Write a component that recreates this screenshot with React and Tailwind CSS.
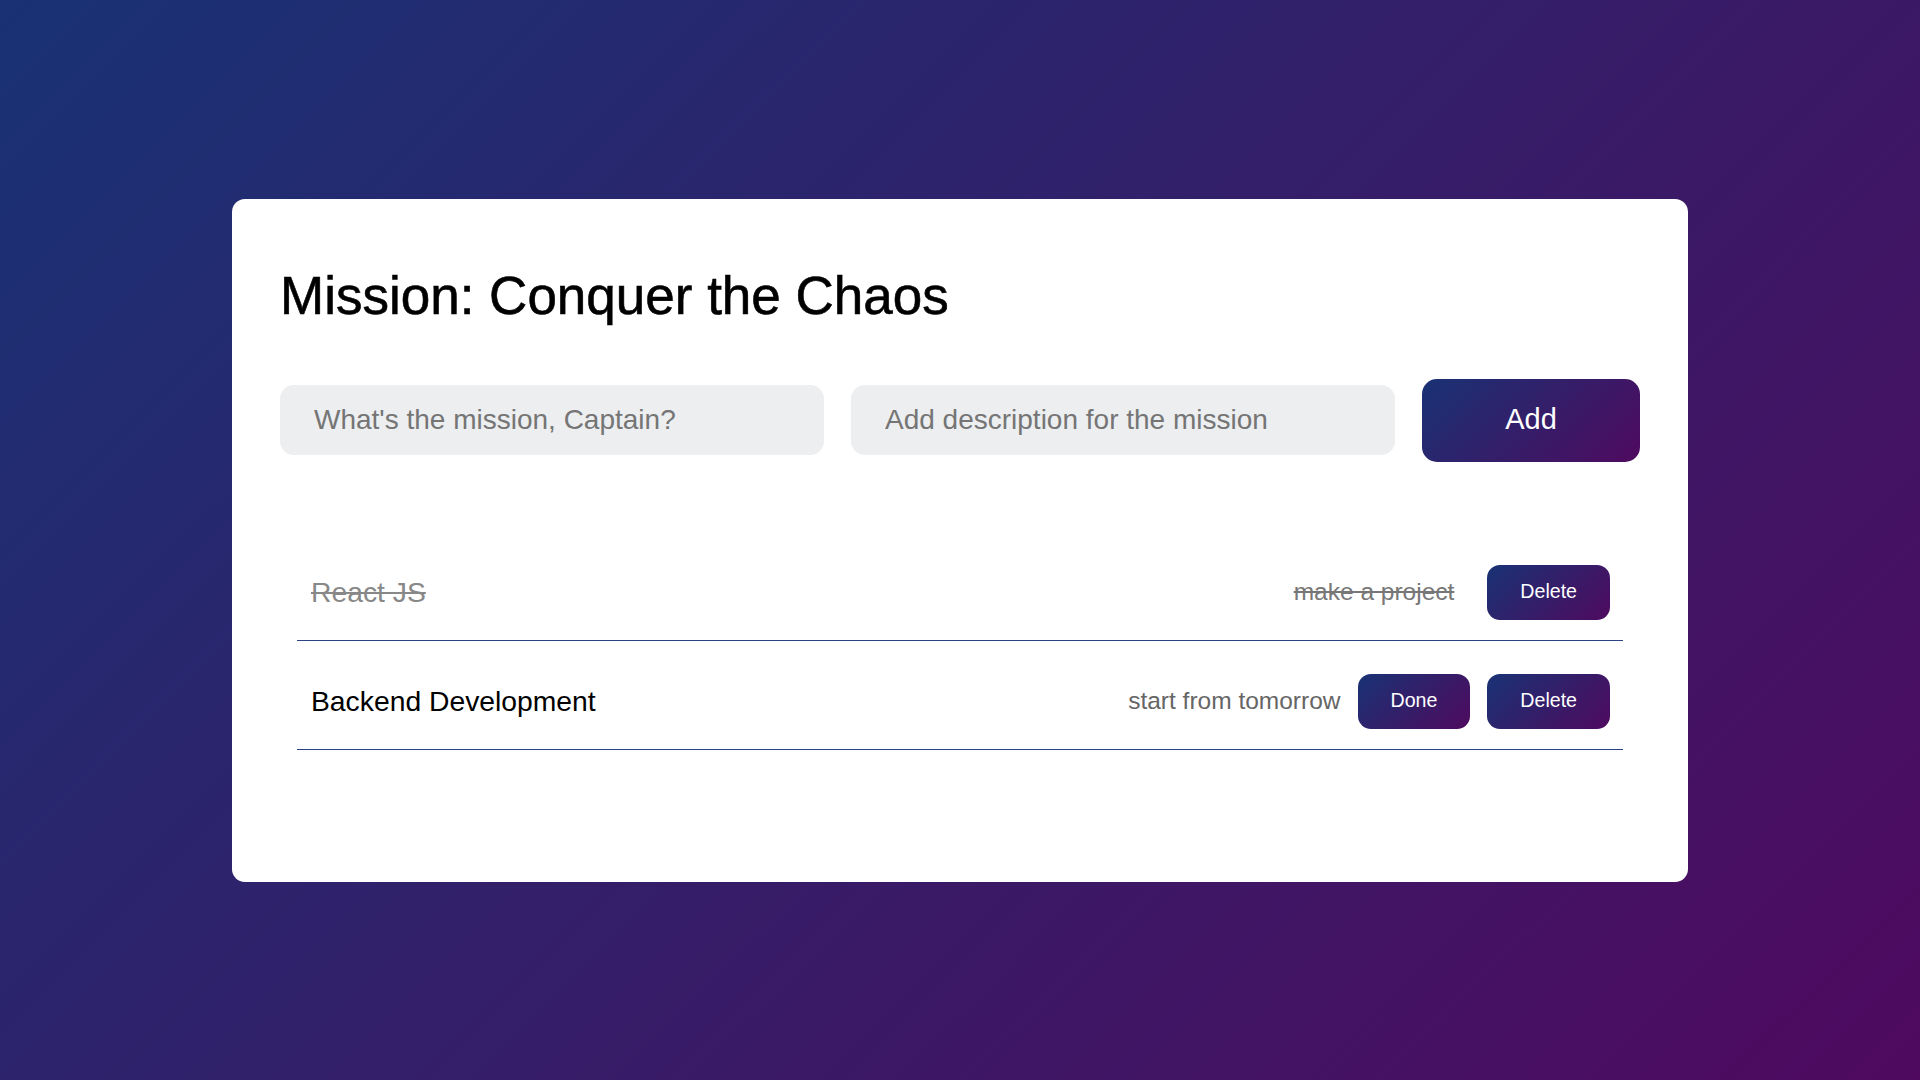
import React, { useState } from 'react';

const gradient = 'bg-[linear-gradient(135deg,#193274,#4f0a5f)]';

const App = () => {
  const [tasks] = useState([
    { id: 1, title: 'React JS', desc: 'make a project', done: true },
    { id: 2, title: 'Backend Development', desc: 'start from tomorrow', done: false }
  ]);

  return (
    <div className={`min-h-screen w-full flex items-center justify-center ${gradient} font-['Liberation_Sans',Arial,sans-serif]`}>
      <div className="w-[1456px] h-[683px] bg-white rounded-[13px] px-[48px] pt-[70px]">
        {/* Title */}
        <h1 className="text-[53px] leading-none font-normal text-black [-webkit-text-stroke:0.6px_black]">
          Mission: Conquer the Chaos
        </h1>

        {/* Inputs */}
        <div className="mt-[57px] flex items-center gap-[27px]">
          <input
            type="text"
            placeholder="What's the mission, Captain?"
            className="flex-1 min-w-0 h-[70px] rounded-[14px] bg-[#eceef0] px-[34px] text-[28px] text-black placeholder:text-[#757575] outline-none"
          />
          <input
            type="text"
            placeholder="Add description for the mission"
            className="flex-1 min-w-0 h-[70px] rounded-[14px] bg-[#eceef0] px-[34px] text-[28px] text-black placeholder:text-[#757575] outline-none"
          />
          <button className={`w-[218px] h-[83px] shrink-0 rounded-[15px] ${gradient} text-white text-[29px]`}>
            Add
          </button>
        </div>

        {/* Task list */}
        <ul className="mt-[70px] mx-[17px]">
          {tasks.map((task) => (
            <li
              key={task.id}
              className="flex items-center justify-between pt-[33px] pb-[20px] pl-[14px] pr-[13px] border-b border-[#2a4585]"
            >
              <span className={`text-[28.3px] ${task.done ? 'line-through text-[#888]' : 'text-black'}`}>
                {task.title}
              </span>
              <div className="flex items-center gap-[17px]">
                <span className={`text-[24.5px] ${task.done ? 'line-through text-[#777] mr-[16px]' : 'text-[#666]'}`}>
                  {task.desc}
                </span>
                {!task.done && (
                  <button className={`h-[55px] px-[33px] rounded-[13px] ${gradient} text-white text-[19.6px]`}>
                    Done
                  </button>
                )}
                <button className={`h-[55px] px-[33px] rounded-[13px] ${gradient} text-white text-[19.6px]`}>
                  Delete
                </button>
              </div>
            </li>
          ))}
        </ul>
      </div>
    </div>
  );
};

export default App;
